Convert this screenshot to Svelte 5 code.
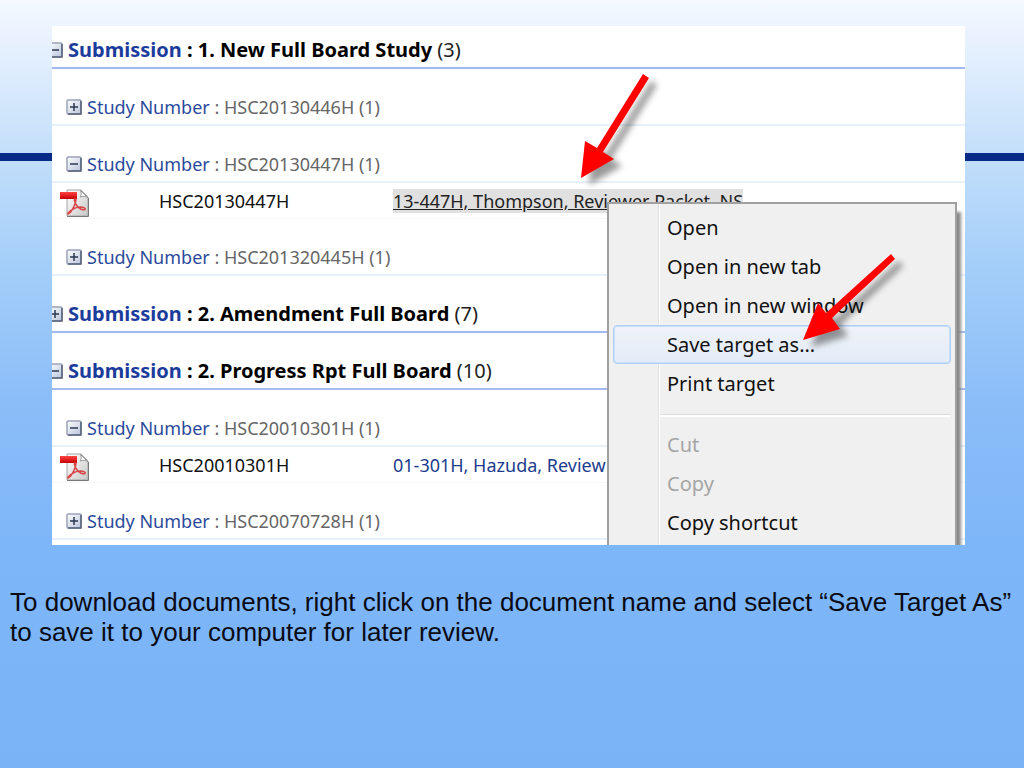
<script lang="ts">
	type Doc = { code: string; name: string; selected?: boolean };
	type Study = { number: string; count: number; open: boolean; docs: Doc[] };
	type Submission = { title: string; count: number; open: boolean; studies: Study[] };

	let submissions: Submission[] = $state([
		{
			title: '1. New Full Board Study',
			count: 3,
			open: true,
			studies: [
				{ number: 'HSC20130446H', count: 1, open: false, docs: [] },
				{
					number: 'HSC20130447H',
					count: 1,
					open: true,
					docs: [{ code: 'HSC20130447H', name: '13-447H, Thompson, Reviewer Packet, NS', selected: true }]
				},
				{ number: 'HSC201320445H', count: 1, open: false, docs: [] }
			]
		},
		{ title: '2. Amendment Full Board', count: 7, open: false, studies: [] },
		{
			title: '2. Progress Rpt Full Board',
			count: 10,
			open: true,
			studies: [
				{
					number: 'HSC20010301H',
					count: 1,
					open: true,
					docs: [{ code: 'HSC20010301H', name: '01-301H, Hazuda, Review' }]
				},
				{ number: 'HSC20070728H', count: 1, open: false, docs: [] }
			]
		}
	]);

	const menu = [
		['Open', 'Open in new tab', 'Open in new window', 'Save target as...', 'Print target'],
		['Cut', 'Copy', 'Copy shortcut']
	];
	const disabled = ['Cut', 'Copy'];
	let active = $state('Save target as...');
</script>

{#snippet toggle(item: Submission | Study, label: string)}
	<button class="toggle" aria-label={label} aria-expanded={item.open} onclick={() => (item.open = !item.open)}>
		<svg width="16" height="16" viewBox="0 0 16 16">
			<defs>
				<linearGradient id="box" x1="0" y1="0" x2="1" y2="1">
					<stop offset="0" stop-color="#fff" />
					<stop offset="1" stop-color="#b9c3da" />
				</linearGradient>
			</defs>
			<rect x="1" y="1" width="14" height="14" rx="1" fill="url(#box)" stroke="#9aa3b6" stroke-width="1.5" />
			<path d="M2 15H15V2" fill="none" stroke="#566078" stroke-width="1.5" />
			<path d={item.open ? 'M4 8H12' : 'M4 8H12M8 4V12'} stroke="#2b3850" stroke-width="1.5" />
		</svg>
	</button>
{/snippet}

<main>
	<section class="panel">
		{#each submissions as sub}
			<div class="row submission">
				{@render toggle(sub, sub.title)}
				<p><b><span class="label">Submission</span> : {sub.title}</b> ({sub.count})</p>
			</div>
			{#if sub.open}
				{#each sub.studies as study}
					<div class="row study">
						{@render toggle(study, study.number)}
						<p><span class="label">Study Number</span> : {study.number} ({study.count})</p>
					</div>
					{#if study.open}
						{#each study.docs as doc}
							<div class="doc">
								<svg width="30" height="30" viewBox="0 0 30 30">
									<defs>
										<linearGradient id="page" x1="0" y1="0" x2="1" y2="1">
											<stop offset="0" stop-color="#fff" />
											<stop offset="1" stop-color="#c9c9c9" />
										</linearGradient>
										<linearGradient id="band" x1="0" y1="0" x2="0" y2="1">
											<stop offset="0" stop-color="#f44" />
											<stop offset="1" stop-color="#c80000" />
										</linearGradient>
									</defs>
									<path d="M7 2H21L28 9V28H7Z" fill="url(#page)" stroke="#a5a5a5" />
									<path d="M7 28.5H28.5V10" fill="none" stroke="#777" />
									<path d="M20 2C22 5 21 8 20 9C23 8 26 8 28 10Z" fill="#fff" stroke="#999" />
									<path d="M0 4H17V11H0Z" fill="url(#band)" />
									<path d="M8 26C11 25 15 18 16 12C16 10 14 11 14.5 13C16 18 20 22 24 22C27 21 24 19 20 19C16 19 11 22 8 25Z" fill="none" stroke="#dc4545" stroke-width="1.5" />
								</svg>
								<span>{doc.code}</span>
								<a href="#{doc.code}" class:selected={doc.selected}>{doc.name}</a>
							</div>
						{/each}
					{/if}
				{/each}
			{/if}
		{/each}

		<div class="menu" role="menu">
			{#each menu as group}
				<div class="group">
					{#each group as item}
						<button
							role="menuitem"
							class:active={item === active}
							disabled={disabled.includes(item)}
							onmouseenter={() => (active = item)}
						>{item}</button>
					{/each}
				</div>
			{/each}
			<svg class="arrow save" width="120" height="110" viewBox="0 0 120 110">
				<path d="M101 1L105 6L42 65L50 76L13 87L28 50L36 60Z" />
			</svg>
		</div>

		<svg class="arrow pick" width="100" height="125" viewBox="0 0 100 125">
			<path d="M74 4L80 8L34 82L45 89L12 108L16 71L28 78Z" />
		</svg>
	</section>

	<p class="caption">
		To download documents, right click on the document name and select “Save Target As” to save it to your computer for later review.
	</p>
</main>

<style>
	:global(body) {
		margin: 0;
	}
	main {
		box-sizing: border-box;
		min-height: 100vh;
		padding-top: 26px;
		background:
			linear-gradient(#062a86, #062a86) 0 153px / 100% 8px no-repeat,
			linear-gradient(#f5f9ff 0, #c4dffa 150px, #a5cff9 260px, #8bbdf8 400px, #7db6f9 550px, #7ab4f7 100%);
	}
	p {
		margin: 0;
	}
	button {
		font: inherit;
		border: 0;
		background: none;
		padding: 0;
	}
	.panel {
		position: relative;
		overflow: hidden;
		margin: 0 59px 0 52px;
		padding-bottom: 5px;
		background: #fff;
		font: 20px/24px "Noto Sans", sans-serif;
		white-space: nowrap;
	}
	.row {
		box-sizing: border-box;
		display: flex;
		align-items: center;
		gap: 5px;
		height: 57px;
		padding-top: 20px;
		border-bottom: 2px solid #e8f0fc;
	}
	.row:first-child {
		height: 43px;
		padding-top: 6px;
	}
	.submission {
		border-bottom-color: #a3baf0;
		color: #222;
	}
	.submission .toggle {
		margin-left: -5px;
	}
	.submission b {
		color: #000;
	}
	.study {
		padding-left: 14px;
		color: #666;
		font-size: 18px;
	}
	.label {
		color: #2b4a9c;
	}
	.submission .label {
		color: #1c3c9c;
	}
	.toggle {
		display: flex;
	}
	.doc {
		box-sizing: border-box;
		display: grid;
		grid-template-columns: 99px 234px 1fr;
		align-items: center;
		height: 36px;
		padding-left: 8px;
		border-bottom: 1px solid #f7f7f7;
		color: #111;
		font-size: 18px;
	}
	.doc svg {
		align-self: end;
	}
	.doc a {
		justify-self: start;
		color: #1c3c8c;
		text-decoration: none;
	}
	.doc a.selected {
		background: #e0e0e0;
		color: #222;
		text-decoration: underline;
	}
	.menu {
		position: absolute;
		box-sizing: border-box;
		top: 176px;
		right: 8px;
		bottom: -8px;
		width: 350px;
		padding: 4px;
		border: 2px solid #a0a0a0;
		background: linear-gradient(90deg, #e2e2e2 1px, #fff 1px) 49px 0 / 2px 100% no-repeat #f0f0f0;
		box-shadow: 4px 10px 3px #888;
	}
	.group + .group {
		margin-left: 47px;
		padding-top: 10px;
		margin-top: 11px;
		border-top: 1px solid #dcdcdc;
		box-shadow: inset 0 2px #fff;
	}
	.menu button {
		box-sizing: border-box;
		display: block;
		width: 100%;
		height: 39px;
		padding-left: 53px;
		border: 1px solid transparent;
		border-radius: 4px;
		color: #111;
		text-align: left;
	}
	.group + .group button {
		padding-left: 6px;
	}
	.menu button:disabled {
		color: #a5a5a5;
	}
	.menu button.active {
		border-color: #aecff7;
		background: linear-gradient(#eff2f7, #e3ecf8);
		box-shadow: inset 0 0 0 1px #c8dff8;
	}
	.arrow {
		position: absolute;
		fill: #f00;
		filter: drop-shadow(8px 7px 3px rgba(0, 0, 0, 0.4));
		pointer-events: none;
	}
	.arrow.save {
		top: 49px;
		left: 181px;
	}
	.arrow.pick {
		top: 44px;
		left: 517px;
	}
	.caption {
		padding: 42px 10px 0;
		font: 26px/30px "Liberation Sans", sans-serif;
		color: #0a0a14;
	}
</style>
